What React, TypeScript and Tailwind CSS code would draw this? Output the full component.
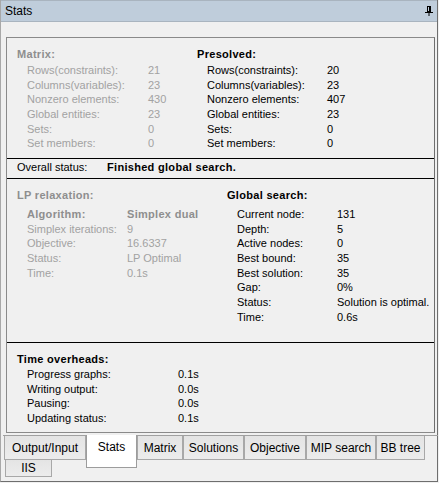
const sans = "font-['Liberation_Sans',Arial,sans-serif]";

type RowProps = {
  label: string;
  value: string;
  lw: string;
  gray?: boolean;
  bold?: boolean;
};

function Row({ label, value, lw, gray, bold }: RowProps) {
  const tone = gray
    ? bold
      ? "text-[#8e8e8e] font-bold tracking-[0.3px]"
      : "text-[#a2a2a2]"
    : bold
      ? "text-black font-bold tracking-[0.3px]"
      : "text-black";
  return (
    <div className={`flex h-[14.7px] whitespace-nowrap leading-[14.7px] ${tone}`}>
      <span className={`shrink-0 ${lw}`}>{label}</span>
      <span>{value}</span>
    </div>
  );
}

function Header({ children, gray }: { children: string; gray?: boolean }) {
  return (
    <div
      className={`h-[15px] whitespace-nowrap font-bold leading-[15px] tracking-[0.3px] ${
        gray ? "text-[#8e8e8e]" : "text-black"
      }`}
    >
      {children}
    </div>
  );
}

const matrix = [
  ["Rows(constraints):", "21"],
  ["Columns(variables):", "23"],
  ["Nonzero elements:", "430"],
  ["Global entities:", "23"],
  ["Sets:", "0"],
  ["Set members:", "0"],
];

const presolved = [
  ["Rows(constraints):", "20"],
  ["Columns(variables):", "23"],
  ["Nonzero elements:", "407"],
  ["Global entities:", "23"],
  ["Sets:", "0"],
  ["Set members:", "0"],
];

const lp = [
  ["Simplex iterations:", "9"],
  ["Objective:", "16.6337"],
  ["Status:", "LP Optimal"],
  ["Time:", "0.1s"],
];

const globalSearch = [
  ["Current node:", "131"],
  ["Depth:", "5"],
  ["Active nodes:", "0"],
  ["Best bound:", "35"],
  ["Best solution:", "35"],
  ["Gap:", "0%"],
  ["Status:", "Solution is optimal."],
  ["Time:", "0.6s"],
];

const overheads = [
  ["Progress graphs:", "0.1s"],
  ["Writing output:", "0.0s"],
  ["Pausing:", "0.0s"],
  ["Updating status:", "0.1s"],
];

const tabs = [
  { label: "Output/Input", w: "w-[82px]" },
  { label: "Stats", w: "w-[51px]", active: true },
  { label: "Matrix", w: "w-[46px]" },
  { label: "Solutions", w: "w-[61px]" },
  { label: "Objective", w: "w-[62px]" },
  { label: "MIP search", w: "w-[70px]" },
  { label: "BB tree", w: "w-[49px]" },
];

function Tab({ label, w, active }: { label: string; w: string; active?: boolean }) {
  if (active) {
    return (
      <div
        className={`relative z-10 -mt-[1px] flex h-[33px] shrink-0 justify-center border border-t-0 border-[#9c9c9c] bg-white pt-[4px] leading-[16px] ${w}`}
      >
        {label}
      </div>
    );
  }
  return (
    <div
      className={`flex h-[24px] shrink-0 items-center justify-center border-b border-l border-r border-[#a8a8a8] bg-gradient-to-b from-[#e4e4e4] to-[#ececec] leading-[16px] ${w}`}
    >
      {label}
    </div>
  );
}

export default function App() {
  return (
    <div className={`h-[483px] w-[439px] bg-[#f0f0f0] text-[11px] text-black ${sans}`}>
      <div className="flex h-[482px] w-[438px] flex-col border-b border-l border-r border-b-[#6e6e6e] border-l-[#a8a8a8] border-r-[#6e6e6e]">
        {/* title bar */}
        <div className="flex h-[22px] shrink-0 items-center justify-between border-b border-t border-[#a9b4bf] bg-[#bfcddb] pl-[4px] pr-[4px]">
          <span className="text-[12px] leading-[16px] text-black">Stats</span>
          <svg width="8" height="10" viewBox="0 0 8 10" className="mb-[1px]">
            <rect x="2.5" y="0.5" width="3" height="5" fill="none" stroke="#000" />
            <rect x="4" y="0" width="1.5" height="5.5" fill="#000" />
            <path d="M0 6.5h8M4 6.5V10" stroke="#000" strokeWidth="1" />
          </svg>
        </div>

        {/* group box */}
        <div className="ml-[5px] mt-[15px] flex h-[396px] w-[429px] shrink-0 flex-col border border-[#8a8a8a] border-r-[#6e6e6e]">
          {/* matrix / presolved */}
          <div className="flex h-[121px] shrink-0 border-b border-black pl-[10px] pt-[9px]">
            <div className="w-[180px] shrink-0">
              <Header gray>Matrix:</Header>
              <div className="mt-[1px] pl-[10px]">
                {matrix.map(([l, v]) => (
                  <Row key={l} label={l} value={v} lw="w-[121px]" gray />
                ))}
              </div>
            </div>
            <div>
              <Header>Presolved:</Header>
              <div className="mt-[1px] pl-[10px]">
                {presolved.map(([l, v]) => (
                  <Row key={l} label={l} value={v} lw="w-[120px]" />
                ))}
              </div>
            </div>
          </div>

          {/* overall status */}
          <div className="flex h-[20px] shrink-0 items-start border-b border-black pl-[10px] pt-[1px] leading-[15px]">
            <span className="w-[90px] shrink-0">Overall status:</span>
            <span className="font-bold tracking-[0.3px]">Finished global search.</span>
          </div>

          {/* lp relaxation / global search */}
          <div className="flex h-[164px] shrink-0 border-b border-black pl-[10px] pt-[9px]">
            <div className="w-[210px] shrink-0">
              <Header gray>LP relaxation:</Header>
              <div className="mt-[4px] pl-[10px]">
                <Row label="Algorithm:" value="Simplex dual" lw="w-[100px]" gray bold />
                {lp.map(([l, v]) => (
                  <Row key={l} label={l} value={v} lw="w-[100px]" gray />
                ))}
              </div>
            </div>
            <div>
              <Header>Global search:</Header>
              <div className="mt-[4px] pl-[10px]">
                {globalSearch.map(([l, v]) => (
                  <Row key={l} label={l} value={v} lw="w-[100px]" />
                ))}
              </div>
            </div>
          </div>

          {/* time overheads */}
          <div className="pl-[10px] pt-[9px]">
            <Header>Time overheads:</Header>
            <div className="pl-[10px]">
              {overheads.map(([l, v]) => (
                <Row key={l} label={l} value={v} lw="w-[151px]" />
              ))}
            </div>
          </div>
        </div>

        {/* tab strip */}
        <div className="ml-[2px] mt-[2px] w-[435px] border-t border-[#a0a0a0]" />
        <div className="pl-[3px] text-[12px]">
          <div className="flex h-[24px]">
            {tabs.map((t) => (
              <Tab key={t.label} label={t.label} w={t.w} active={t.active} />
            ))}
          </div>
          <div className="flex">
            <div className="ml-[1px] flex h-[17px] w-[47px] items-center justify-center border-b border-l border-r border-[#a8a8a8] bg-gradient-to-b from-[#e4e4e4] to-[#ececec] leading-[14px]">
              IIS
            </div>
          </div>
        </div>
      </div>
    </div>
  );
}
